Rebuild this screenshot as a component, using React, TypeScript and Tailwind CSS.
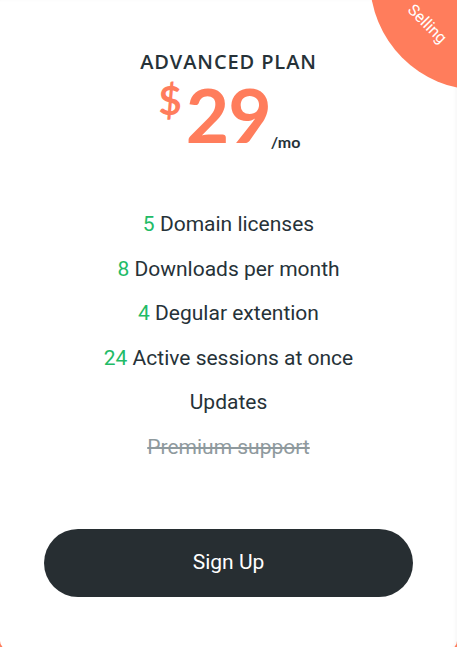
import React from "react";

const features: { n?: string; text: string; strike?: boolean }[] = [
  { n: "5", text: "Domain licenses" },
  { n: "8", text: "Downloads per month" },
  { n: "4", text: "Degular extention" },
  { n: "24", text: "Active sessions at once" },
  { text: "Updates" },
  { text: "Premium support", strike: true },
];

export default function App() {
  return (
    <div className="relative w-[457px] h-[647px] overflow-hidden bg-[#ff7d5c]">
      <div className="relative w-[457px] h-[649px] bg-white rounded-b-[8px] overflow-hidden shadow-[inset_-2px_0_3px_rgba(0,0,0,0.03)]">
        <div className="absolute w-[220px] h-[220px] rounded-full bg-[#ff7d5c] left-[370px] top-[-130px]" />
        <div
          className="absolute left-[397px] top-[16px] w-[60px] text-center text-white text-[16px] leading-none rotate-45 origin-center"
          style={{ fontFamily: "Roboto, sans-serif" }}
        >
          Selling
        </div>

        <div className="flex flex-col items-center pt-[51px]">
          <h2
            className="text-[20px] leading-[22px] font-semibold tracking-[0.9px] text-[#263238]"
            style={{ fontFamily: "'Open Sans', sans-serif" }}
          >
            ADVANCED PLAN
          </h2>
          <div className="flex items-start justify-center mt-[4px] ml-[2px]" style={{ fontFamily: "Lato, sans-serif" }}>
            <span className="text-[#ff7d5c] text-[40px] leading-none font-bold mt-[3px] mr-[4px]">$</span>
            <span className="text-[#ff7d5c] text-[75px] leading-none font-bold tracking-[-1px]">29</span>
            <span className="self-end text-[#263238] text-[16px] leading-none font-bold mb-[2px] ml-[0px]">/mo</span>
          </div>

          <ul
            className="flex flex-col items-center mt-[60px] gap-[20px] text-[21px] leading-[24.6px] text-[#263238]"
            style={{ fontFamily: "Roboto, sans-serif" }}
          >
            {features.map((f) => (
              <li key={f.text} className={f.strike ? "line-through text-[#8f9a9e]" : ""}>
                {f.n && <span className="text-[#22bb66]">{f.n} </span>}
                {f.text}
              </li>
            ))}
          </ul>

          <button
            className="mt-[69px] w-[369px] h-[68px] rounded-full bg-[#272e32] text-white text-[21px]"
            style={{ fontFamily: "Roboto, sans-serif" }}
          >
            Sign Up
          </button>
        </div>
      </div>
    </div>
  );
}
